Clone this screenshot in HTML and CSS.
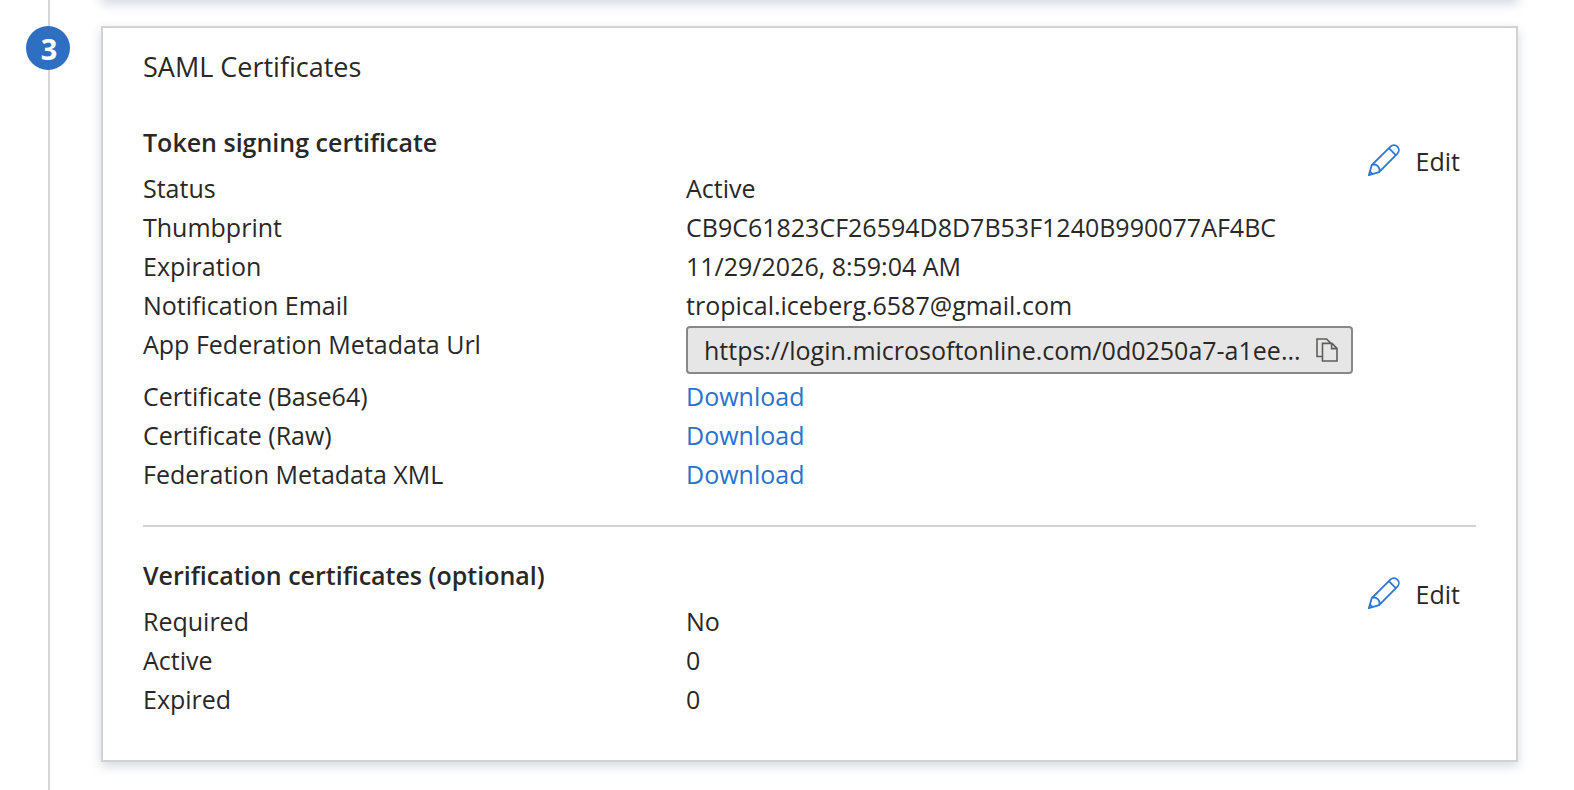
FILE: index.html
```html
<!DOCTYPE html>
<html lang="en">
<head>
<meta charset="utf-8">
<title>SAML Certificates</title>
<link rel="stylesheet" href="styles.css">
</head>
<body>
<svg class="sprite" aria-hidden="true">
  <symbol id="pencil" viewBox="0 0 32 32">
    <path d="M.9 31.1 3.8 21 22.4 2.6a4.9 4.9 0 0 1 7 7L11 28.2.9 31.1ZM3.8 21a5.5 5.5 0 0 1 7.2 7.2M1.9 27.4 4.6 30.1M20.9 4.2 27.8 11.1"/>
  </symbol>
  <symbol id="copy" viewBox="0 0 22 24">
    <path d="M6.5 18.5H1V1h9.5L15 5.4M6.5 5.4H16l5 5V23H6.5ZM15.6 5.4v5.2H21"/>
  </symbol>
</svg>
<main class="steps">
  <div class="rail"><span class="step-number">3</span></div>
  <div class="cards">
    <div class="card card-previous"></div>
    <article class="card">
      <h1 class="card-title">SAML Certificates</h1>
      <section class="group">
        <div class="details">
          <h2 class="group-title">Token signing certificate</h2>
          <dl class="fields">
            <dt>Status</dt><dd>Active</dd>
            <dt>Thumbprint</dt><dd>CB9C61823CF26594D8D7B53F1240B990077AF4BC</dd>
            <dt>Expiration</dt><dd>11/29/2026, 8:59:04 AM</dd>
            <dt>Notification Email</dt><dd>tropical.iceberg.6587@gmail.com</dd>
            <dt><label for="metadata-url">App Federation Metadata Url</label></dt>
            <dd>
              <div class="copy-box">
                <input class="copy-input" id="metadata-url" type="text" readonly value="https://login.microsoftonline.com/0d0250a7-a1ee...">
                <button class="copy-button" type="button" aria-label="Copy"><svg class="copy-icon"><use href="#copy"/></svg></button>
              </div>
            </dd>
            <dt>Certificate (Base64)</dt><dd><a class="link" href="#">Download</a></dd>
            <dt>Certificate (Raw)</dt><dd><a class="link" href="#">Download</a></dd>
            <dt>Federation Metadata XML</dt><dd><a class="link" href="#">Download</a></dd>
          </dl>
        </div>
        <button class="edit" type="button"><svg class="edit-icon"><use href="#pencil"/></svg>Edit</button>
      </section>
      <section class="group">
        <div class="details">
          <h2 class="group-title">Verification certificates (optional)</h2>
          <dl class="fields">
            <dt>Required</dt><dd>No</dd>
            <dt>Active</dt><dd>0</dd>
            <dt>Expired</dt><dd>0</dd>
          </dl>
        </div>
        <button class="edit" type="button"><svg class="edit-icon"><use href="#pencil"/></svg>Edit</button>
      </section>
    </article>
  </div>
</main>
</body>
</html>
```
FILE: styles.css
```css
* {
  box-sizing: border-box;
}

body {
  margin: 0;
  background: #fff;
  color: #292827;
  font: 25px/39px "Open Sans", "Noto Sans", sans-serif;
}

h1, h2, dl, dd {
  margin: 0;
}

button, input {
  border: 0;
  padding: 0;
  background: none;
  color: inherit;
  font: inherit;
}

.sprite {
  display: none;
}

.steps {
  display: flex;
  gap: 31px;
  min-height: 100vh;
  padding: 0 56px 0 26px;
}

.rail {
  width: 44px;
  padding-top: 26px;
  background: linear-gradient(#d6d6d6, #d6d6d6) 22px 0 / 2px 100% no-repeat;
}

.step-number {
  display: flex;
  align-items: center;
  justify-content: center;
  height: 44px;
  border-radius: 50%;
  background: #2f6fc1;
  color: #fff;
  font-size: 29px;
  font-weight: 700;
  padding-left: 2px;
}

.cards {
  flex: 1;
  min-width: 0;
}

.card {
  border: 2px solid #d2d2d2;
  padding: 19px 40px 41px;
  box-shadow: 0 4px 10px rgba(40, 60, 110, 0.2);
}

/* Scrolled out above the window; only its shadow shows. */
.card-previous {
  height: 40px;
  margin: -40px 0 26px;
  padding: 0;
}

.card-title {
  font-size: 27px;
  font-weight: 400;
}

.group {
  display: flex;
  align-items: flex-start;
  padding-top: 37px;
}

.group + .group {
  margin-top: 31px;
  border-top: 2px solid #d2d2d2;
  padding-top: 29px;
}

.details {
  flex: 1;
  min-width: 0;
}

.group-title {
  margin-bottom: 7px;
  font-size: 25px;
  font-weight: 600;
}

.fields {
  display: grid;
  grid-template-columns: 543px minmax(0, 1fr);
}

.copy-box {
  display: flex;
  align-items: center;
  height: 48px;
  margin: 1px 0 3px;
  border: 2px solid #888;
  border-radius: 4px;
  padding: 0 13px 0 16px;
  background: #e6e6e6;
}

.copy-input {
  flex: 1;
  min-width: 0;
  text-overflow: ellipsis;
}

.copy-button {
  display: flex;
}

.copy-icon {
  width: 22px;
  height: 24px;
  fill: none;
  stroke: #605e5c;
  stroke-width: 1.6;
}

.link {
  color: #2b72cc;
  text-decoration: none;
}

.edit {
  display: flex;
  align-items: center;
  gap: 16px;
  margin: 19px 16px 0 15px;
}

.edit-icon {
  width: 32px;
  height: 32px;
  margin-bottom: 4px;
  fill: none;
  stroke: #2f78d2;
  stroke-width: 1.8;
}
```
